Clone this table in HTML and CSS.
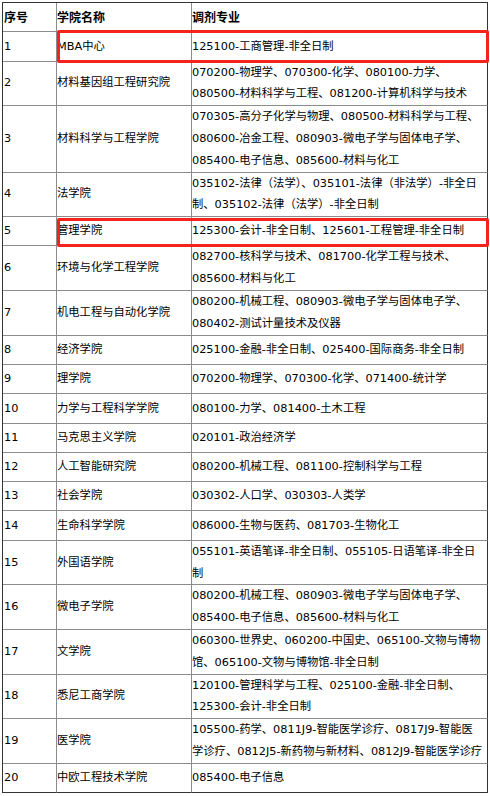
FILE: index.html
```html
<!DOCTYPE html>
<html lang="zh-CN">
<head>
<meta charset="utf-8">
<title>调剂专业</title>
<link rel="stylesheet" href="styles.css">
</head>
<body>
<div class="sheet">
  <div class="cell no head">序号</div><div class="cell name head">学院名称</div><div class="cell major head">调剂专业</div>
  <div class="cell no">1</div><div class="cell name">MBA中心</div><div class="cell major"><span>125100-工商管理-非全日制</span></div>
  <div class="cell no">2</div><div class="cell name">材料基因组工程研究院</div><div class="cell major"><span>070200-物理学、070300-化学、080100-力学、<br>080500-材料科学与工程、081200-计算机科学与技术</span></div>
  <div class="cell no">3</div><div class="cell name">材料科学与工程学院</div><div class="cell major"><span>070305-高分子化学与物理、080500-材料科学与工程、<br>080600-冶金工程、080903-微电子学与固体电子学、<br>085400-电子信息、085600-材料与化工</span></div>
  <div class="cell no">4</div><div class="cell name">法学院</div><div class="cell major"><span>035102-法律（法学）、035101-法律（非法学）-非全日<br>制、035102-法律（法学）-非全日制</span></div>
  <div class="cell no">5</div><div class="cell name">管理学院</div><div class="cell major"><span>125300-会计-非全日制、125601-工程管理-非全日制</span></div>
  <div class="cell no">6</div><div class="cell name">环境与化学工程学院</div><div class="cell major"><span>082700-核科学与技术、081700-化学工程与技术、<br>085600-材料与化工</span></div>
  <div class="cell no">7</div><div class="cell name">机电工程与自动化学院</div><div class="cell major"><span>080200-机械工程、080903-微电子学与固体电子学、<br>080402-测试计量技术及仪器</span></div>
  <div class="cell no">8</div><div class="cell name">经济学院</div><div class="cell major"><span>025100-金融-非全日制、025400-国际商务-非全日制</span></div>
  <div class="cell no">9</div><div class="cell name">理学院</div><div class="cell major"><span>070200-物理学、070300-化学、071400-统计学</span></div>
  <div class="cell no">10</div><div class="cell name">力学与工程科学学院</div><div class="cell major"><span>080100-力学、081400-土木工程</span></div>
  <div class="cell no">11</div><div class="cell name">马克思主义学院</div><div class="cell major"><span>020101-政治经济学</span></div>
  <div class="cell no">12</div><div class="cell name">人工智能研究院</div><div class="cell major"><span>080200-机械工程、081100-控制科学与工程</span></div>
  <div class="cell no">13</div><div class="cell name">社会学院</div><div class="cell major"><span>030302-人口学、030303-人类学</span></div>
  <div class="cell no">14</div><div class="cell name">生命科学学院</div><div class="cell major"><span>086000-生物与医药、081703-生物化工</span></div>
  <div class="cell no">15</div><div class="cell name">外国语学院</div><div class="cell major"><span>055101-英语笔译-非全日制、055105-日语笔译-非全日<br>制</span></div>
  <div class="cell no">16</div><div class="cell name">微电子学院</div><div class="cell major"><span>080200-机械工程、080903-微电子学与固体电子学、<br>085400-电子信息、085600-材料与化工</span></div>
  <div class="cell no">17</div><div class="cell name">文学院</div><div class="cell major"><span>060300-世界史、060200-中国史、065100-文物与博物<br>馆、065100-文物与博物馆-非全日制</span></div>
  <div class="cell no">18</div><div class="cell name">悉尼工商学院</div><div class="cell major"><span>120100-管理科学与工程、025100-金融-非全日制、<br>125300-会计-非全日制</span></div>
  <div class="cell no">19</div><div class="cell name">医学院</div><div class="cell major"><span>105500-药学、0811J9-智能医学诊疗、0817J9-智能医<br>学诊疗、0812J5-新药物与新材料、0812J9-智能医学诊疗</span></div>
  <div class="cell no last">20</div><div class="cell name last">中欧工程技术学院</div><div class="cell major last"><span>085400-电子信息</span></div>
  <div class="hl hl-mba"></div>
  <div class="hl hl-mgmt"></div>
</div>
</body>
</html>
```
FILE: styles.css
```css
html, body {
  margin: 0;
  padding: 0;
  background: #ffffff;
}

body {
  padding: 2px 0 0 2px;
  font-family: "DejaVu Sans", "Noto Sans CJK SC", sans-serif;
  font-size: 11.3px;
  color: #000000;
}

.sheet {
  position: relative;
  display: grid;
  grid-template-columns: 54px 135px 296px;
  width: max-content;
  border-left: 1px solid #333333;
  border-top: 1px solid #333333;
}

.cell {
  box-sizing: border-box;
  display: flex;
  align-items: center;
  min-height: 29.3px;
  line-height: 21.8px;
  border-right: 1px solid #8c8c8c;
  border-bottom: 1px solid #8c8c8c;
  padding: 0;
}

.no {
  padding-left: 1px;
}

.major {
  white-space: nowrap;
  border-right-color: #333333;
}

.head {
  font-weight: bold;
  font-family: "Noto Sans CJK SC", sans-serif;
  font-size: 12px;
}

.last {
  border-bottom-color: #333333;
}

.hl {
  position: absolute;
  box-sizing: border-box;
  border: 3px solid #f4231b;
  border-radius: 2px;
  left: 54px;
  width: 432px;
}

.hl-mba {
  top: 27px;
  height: 33px;
}

.hl-mgmt {
  top: 215px;
  height: 29px;
}
```
